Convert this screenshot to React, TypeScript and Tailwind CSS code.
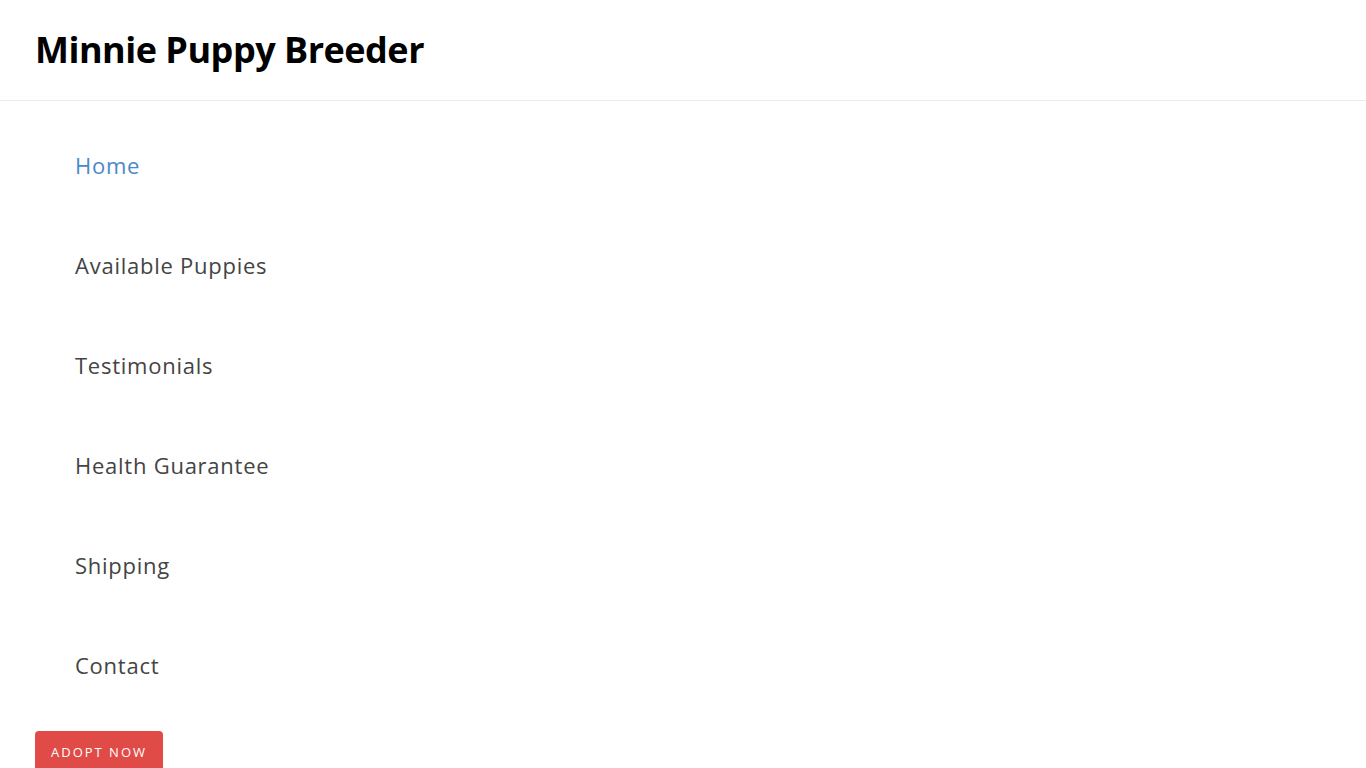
import React from 'react';

const links = ['Home', 'Available Puppies', 'Testimonials', 'Health Guarantee', 'Shipping', 'Contact'];

export default function App() {
  return (
    <div className="min-h-screen bg-white" style={{ fontFamily: '"Open Sans", "Liberation Sans", sans-serif' }}>
      <header className="h-[101px] border-b border-[#ebebeb] flex items-center px-[35px]">
        <h1 className="text-[36px] font-bold text-black tracking-[-0.5px] leading-none">Minnie Puppy Breeder</h1>
      </header>
      <nav className="pt-[14px] px-[75px]">
        <ul>
          {links.map((l, i) => (
            <li key={l} className="h-[100px] flex items-center">
              <a className={`text-[22px] tracking-[0.75px] ${i === 0 ? 'text-[#4a89c9]' : 'text-[#444444]'}`}>{l}</a>
            </li>
          ))}
        </ul>
      </nav>
      <div className="px-[35px] mt-4">
        <button className="h-[44px] w-[128px] bg-[#e14b47] rounded-[4px] text-white text-[13px] tracking-[2px] flex items-start justify-center pt-[12px]">
          ADOPT NOW
        </button>
      </div>
    </div>
  );
}
